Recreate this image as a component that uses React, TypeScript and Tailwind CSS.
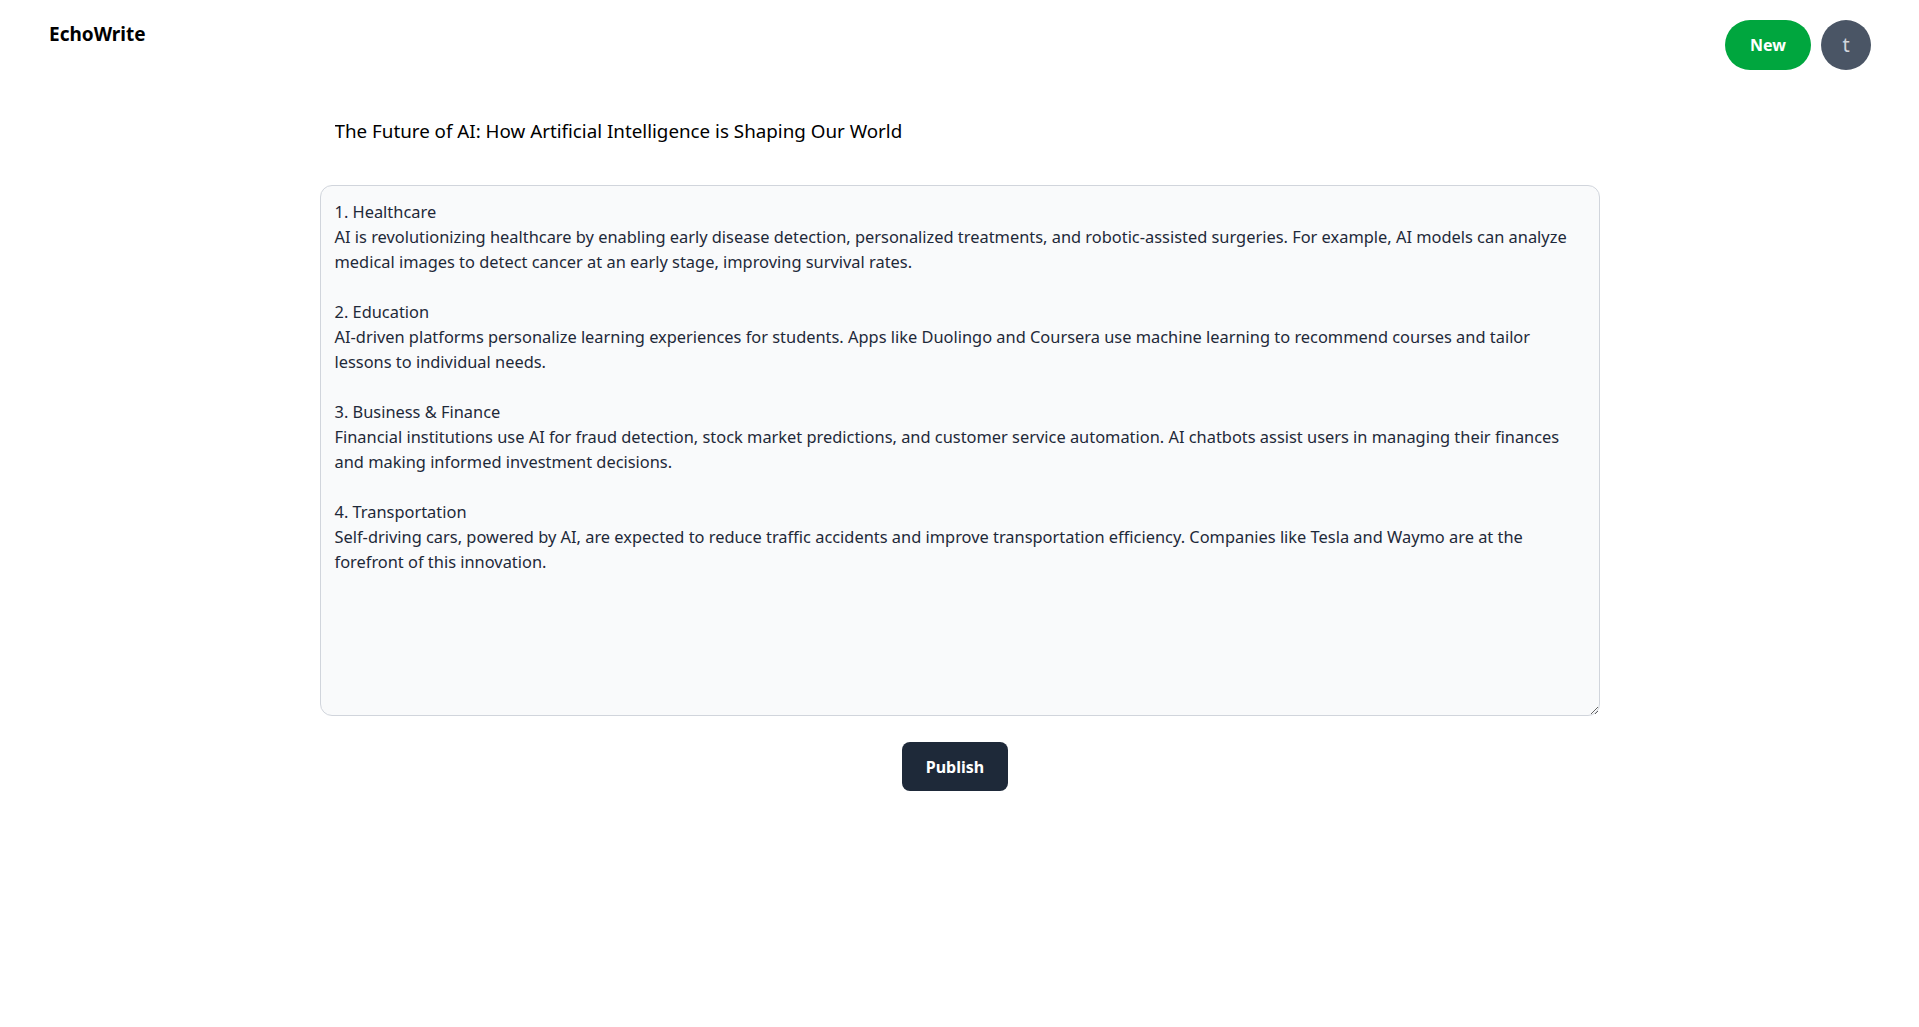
import { useState } from 'react';

const INITIAL_TITLE = 'The Future of AI: How Artificial Intelligence is Shaping Our World';

const INITIAL_BODY = [
  '1. Healthcare',
  'AI is revolutionizing healthcare by enabling early disease detection, personalized treatments, and robotic-assisted surgeries. For example, AI models can analyze',
  'medical images to detect cancer at an early stage, improving survival rates.',
  '',
  '2. Education',
  'AI-driven platforms personalize learning experiences for students. Apps like Duolingo and Coursera use machine learning to recommend courses and tailor',
  'lessons to individual needs.',
  '',
  '3. Business & Finance',
  'Financial institutions use AI for fraud detection, stock market predictions, and customer service automation. AI chatbots assist users in managing their finances',
  'and making informed investment decisions.',
  '',
  '4. Transportation',
  'Self-driving cars, powered by AI, are expected to reduce traffic accidents and improve transportation efficiency. Companies like Tesla and Waymo are at the',
  'forefront of this innovation.',
].join('\n');

const Header = () => (
  <header className="flex items-start justify-between px-12 py-5">
    <h1 className="ml-px text-[19px] leading-7 font-bold text-black">EchoWrite</h1>
    <div className="flex items-center gap-2.5">
      <button className="h-[50px] px-[25px] rounded-full bg-[#00a63e] text-white text-base font-bold">
        New
      </button>
      <div className="w-[50px] h-[50px] rounded-full bg-[#4a5565] flex items-center justify-center text-xl text-[#d1d5dc]">
        t
      </div>
    </div>
  </header>
);

export default function App() {
  const [title, setTitle] = useState(INITIAL_TITLE);
  const [body, setBody] = useState(INITIAL_BODY);

  return (
    <div className="min-h-screen bg-white font-['Noto_Sans',sans-serif]">
      <Header />

      <main className="max-w-[1280px] mx-auto pt-[18px] flex flex-col">
        {/* Title input */}
        <input
          value={title}
          onChange={(e) => setTitle(e.target.value)}
          className="h-[46px] w-full pl-[14px] pr-3 border border-transparent bg-transparent text-[18.8px] leading-7 text-black focus:outline-none"
        />

        {/* Body editor */}
        <textarea
          value={body}
          onChange={(e) => setBody(e.target.value)}
          className="mt-[31px] h-[531px] w-full pl-[14px] pr-3 pt-[13px] pb-3 rounded-xl border border-[#d1d5dc] bg-[#f9fafb] text-[16.4px] leading-[25px] text-[#1e2939] focus:outline-none whitespace-pre"
        />

        <div className="mt-[26px] flex justify-center pr-[9px]">
          <button className="h-[49px] px-6 rounded-lg bg-[#1e2939] text-white text-base font-bold">
            Publish
          </button>
        </div>
      </main>
    </div>
  );
}
